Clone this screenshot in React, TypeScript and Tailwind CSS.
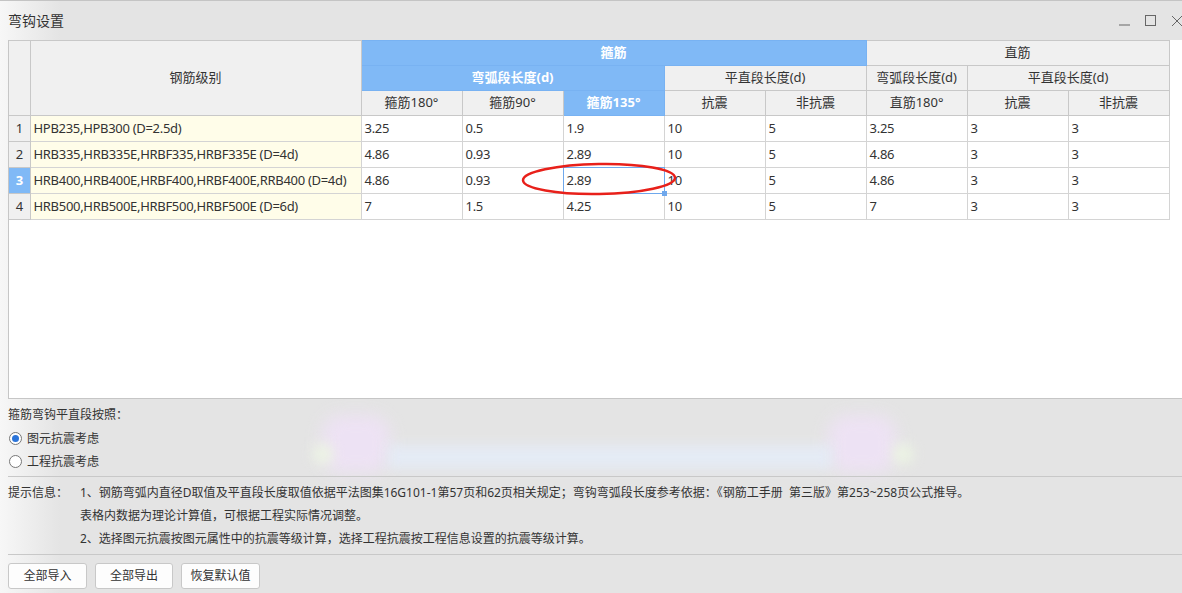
import React from "react";

const font = { fontFamily: '"Segoe UI", "Noto Sans", "Noto Sans CJK SC", sans-serif' };

const rows = [
  ["HPB235,HPB300 (D=2.5d)", "3.25", "0.5", "1.9", "10", "5", "3.25", "3", "3"],
  ["HRB335,HRB335E,HRBF335,HRBF335E (D=4d)", "4.86", "0.93", "2.89", "10", "5", "4.86", "3", "3"],
  ["HRB400,HRB400E,HRBF400,HRBF400E,RRB400 (D=4d)", "4.86", "0.93", "2.89", "10", "5", "4.86", "3", "3"],
  ["HRB500,HRB500E,HRBF500,HRBF500E (D=6d)", "7", "1.5", "4.25", "10", "5", "7", "3", "3"],
];

export default function App() {
  return (
    <div
      className="relative w-[1182px] h-[593px] overflow-hidden bg-[linear-gradient(90deg,#f7f7f7_0px,#e4e4e4_60px)] text-[#333] border-t border-[#c4c4c4]"
      style={font}
    >
      {/* title bar */}
      <div className="flex h-[39px] items-center justify-between pl-[8px]">
        <span className="text-[14px] text-[#333]">弯钩设置</span>
        <div className="flex items-center gap-[15px] mr-[-1px]">
          <svg width="11" height="11" viewBox="0 0 11 11"><line x1="0" y1="10" x2="11" y2="10" stroke="#666" strokeWidth="1" /></svg>
          <svg width="11" height="11" viewBox="0 0 11 11"><rect x="0.5" y="0.5" width="10" height="10" fill="none" stroke="#666" strokeWidth="1" /></svg>
          <svg width="12" height="12" viewBox="0 0 12 12"><path d="M1 1L11 11M11 1L1 11" stroke="#666" strokeWidth="1" /></svg>
        </div>
      </div>

      {/* grid area */}
      <div className="relative ml-[8px] h-[359px] bg-white border-b border-l border-[#c6c6c6]">
        <table className="table-fixed border-collapse text-[13px] w-[1160px]">
          <colgroup>
            <col className="w-[21px]" />
            <col className="w-[331px]" />
            <col className="w-[101px]" />
            <col className="w-[101px]" />
            <col className="w-[101px]" />
            <col className="w-[101px]" />
            <col className="w-[101px]" />
            <col className="w-[101px]" />
            <col className="w-[101px]" />
            <col className="w-[101px]" />
          </colgroup>
          <thead>
            <tr className="h-[25px]">
              <th rowSpan={3} className="bg-[#f0f0f0] border border-[#c8c8c8] border-l-0 font-normal"></th>
              <th rowSpan={3} className="bg-[#f0f0f0] border border-[#c8c8c8] font-normal text-[#333]">钢筋级别</th>
              <th colSpan={5} className="bg-[#80b9f6] border border-[#78b2f2] font-bold text-white">箍筋</th>
              <th colSpan={3} className="bg-[#f0f0f0] border border-[#c8c8c8] font-normal text-[#333]">直筋</th>
            </tr>
            <tr className="h-[25px]">
              <th colSpan={3} className="bg-[#80b9f6] border border-[#78b2f2] font-bold text-white">弯弧段长度(d)</th>
              <th colSpan={2} className="bg-[#f0f0f0] border border-[#c8c8c8] font-normal">平直段长度(d)</th>
              <th className="bg-[#f0f0f0] border border-[#c8c8c8] font-normal">弯弧段长度(d)</th>
              <th colSpan={2} className="bg-[#f0f0f0] border border-[#c8c8c8] font-normal">平直段长度(d)</th>
            </tr>
            <tr className="h-[25px]">
              <th className="bg-[#f0f0f0] border border-[#c8c8c8] font-normal">箍筋180°</th>
              <th className="bg-[#f0f0f0] border border-[#c8c8c8] font-normal">箍筋90°</th>
              <th className="bg-[#80b9f6] border border-[#78b2f2] font-bold text-white">箍筋135°</th>
              <th className="bg-[#f0f0f0] border border-[#c8c8c8] font-normal">抗震</th>
              <th className="bg-[#f0f0f0] border border-[#c8c8c8] font-normal">非抗震</th>
              <th className="bg-[#f0f0f0] border border-[#c8c8c8] font-normal">直筋180°</th>
              <th className="bg-[#f0f0f0] border border-[#c8c8c8] font-normal">抗震</th>
              <th className="bg-[#f0f0f0] border border-[#c8c8c8] font-normal">非抗震</th>
            </tr>
          </thead>
          <tbody className="tracking-[-0.3px]">
            {rows.map((r, i) => (
              <tr key={i} className="h-[26px]">
                {i === 2 ? (
                  <td className="bg-[#80b9f6] border border-[#c8c8c8] border-l-0 text-center font-bold text-white">{i + 1}</td>
                ) : (
                  <td className="bg-[#f0f0f0] border border-[#c8c8c8] border-l-0 text-center">{i + 1}</td>
                )}
                <td className="bg-[#fffde9] border border-[#d4d4d4] pl-[3px] whitespace-nowrap">{r[0]}</td>
                {r.slice(1).map((v, j) =>
                  i === 2 && j === 2 ? (
                    <td key={j} className="relative border border-[#d4d4d4] pl-[3px]">
                      {v}
                      <div className="absolute inset-[-1px] border border-[#6fa8ec]"></div>
                      <div className="absolute right-[-3px] bottom-[-3px] w-[5px] h-[5px] bg-[#6fa8ec]"></div>
                    </td>
                  ) : (
                    <td key={j} className="border border-[#d4d4d4] pl-[3px]">{v}</td>
                  )
                )}
              </tr>
            ))}
          </tbody>
        </table>
      </div>

      {/* glow decoration */}
      <div className="pointer-events-none absolute left-[322px] top-[414px] w-[68px] h-[58px] rounded-[20px] bg-[#f0e2f8] blur-[8px] opacity-80"></div>
      <div className="pointer-events-none absolute left-[828px] top-[414px] w-[68px] h-[58px] rounded-[20px] bg-[#f0e2f8] blur-[8px] opacity-80"></div>
      <div className="pointer-events-none absolute left-[388px] top-[444px] w-[444px] h-[24px] bg-[#e5ecf7] blur-[6px] opacity-90"></div>
      <div className="pointer-events-none absolute left-[312px] top-[442px] w-[22px] h-[22px] rounded-full bg-[#edf6e3] blur-[6px] opacity-80"></div>
      <div className="pointer-events-none absolute left-[892px] top-[442px] w-[22px] h-[22px] rounded-full bg-[#edf6e3] blur-[6px] opacity-80"></div>

      {/* options */}
      <div className="relative flex flex-col text-[12px] px-[8px]">
        <div className="h-[28px] flex items-center pt-[4px]">箍筋弯钩平直段按照：</div>
        <label className="h-[23px] flex items-center gap-[5px] pl-[1px]">
          <span className="w-[13px] h-[13px] rounded-full border border-[#777] bg-white flex items-center justify-center">
            <span className="w-[7px] h-[7px] rounded-full bg-[#2b74d9]"></span>
          </span>
          图元抗震考虑
        </label>
        <label className="h-[23px] flex items-center gap-[5px] pl-[1px]">
          <span className="w-[13px] h-[13px] rounded-full border border-[#777] bg-white"></span>
          工程抗震考虑
        </label>
      </div>
      <div className="relative ml-[8px] mt-[3px] border-t border-[#c8c8c8]"></div>
      <div className="relative flex text-[12px] px-[8px] pt-[4px]">
        <div className="w-[72px] shrink-0 leading-[23px]">提示信息：</div>
        <div className="flex flex-col leading-[23px]">
          <div>1、钢筋弯弧内直径D取值及平直段长度取值依据平法图集16G101-1第57页和62页相关规定；弯钩弯弧段长度参考依据：《钢筋工手册&nbsp;&nbsp;第三版》第253~258页公式推导。</div>
          <div>表格内数据为理论计算值，可根据工程实际情况调整。</div>
          <div>2、选择图元抗震按图元属性中的抗震等级计算，选择工程抗震按工程信息设置的抗震等级计算。</div>
        </div>
      </div>
      <div className="relative ml-[8px] mt-[4px] border-t border-[#c8c8c8]"></div>
      <div className="relative flex gap-[8px] px-[8px] pt-[8px] text-[12px]">
        <button className="w-[79px] h-[26px] rounded-[3px] border border-[#c8c8c8] bg-[#fdfdfd]">全部导入</button>
        <button className="w-[78px] h-[26px] rounded-[3px] border border-[#c8c8c8] bg-[#fdfdfd]">全部导出</button>
        <button className="w-[79px] h-[26px] rounded-[3px] border border-[#c8c8c8] bg-[#fdfdfd]">恢复默认值</button>
      </div>

      {/* red annotation ellipse */}
      <svg className="pointer-events-none absolute left-[518px] top-[158px]" width="164" height="40" viewBox="0 0 164 40">
        <ellipse cx="81" cy="20" rx="76" ry="15" fill="none" stroke="#e8201a" strokeWidth="2.5" transform="rotate(-1 81 20)" />
      </svg>
    </div>
  );
}
